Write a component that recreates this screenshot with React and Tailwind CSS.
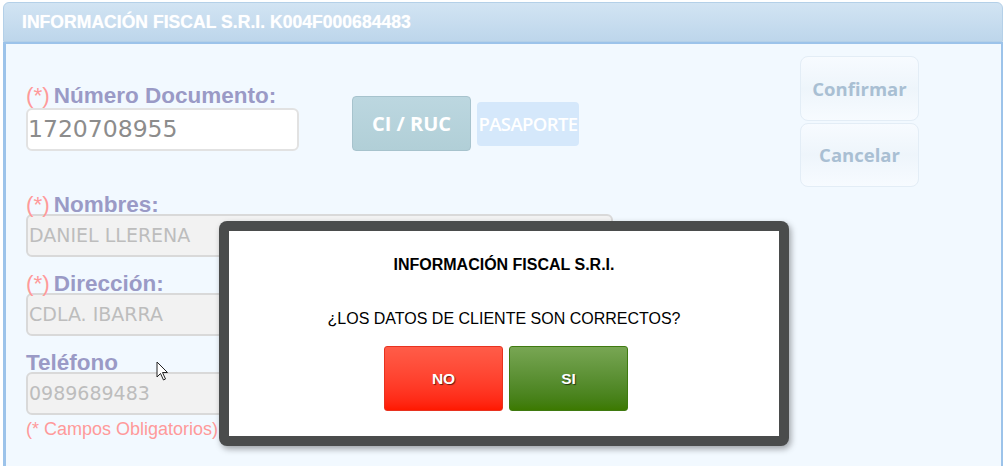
import React from 'react';

const labelCls = "font-['Liberation_Sans',Arial,sans-serif] text-[22.5px] leading-[23px] font-bold text-[#9a9ac6] whitespace-nowrap";
const reqCls = "font-normal text-[#ff9a9a] mr-[4px]";

const Field = ({ label, required, value, className }) => (
  <div className={className}>
    <div className={labelCls}>
      {required && <span className={reqCls}>(*)</span>}
      {label}
    </div>
    <div className="mt-[-2px] h-[43px] w-[587px] rounded-[6px] border-2 border-[#d9d9d9] bg-[#f2f2f2] flex items-center px-[1px] font-['DejaVu_Sans',sans-serif] text-[19px] text-[#bdbdbd]">
      {value}
    </div>
  </div>
);

const Cursor = () => (
  <svg className="absolute left-[156px] top-[361px]" width="13" height="20" viewBox="0 0 13 20">
    <path d="M1 1 L1 16 L4.5 12.5 L7.5 19 L9.5 18 L6.5 11.5 L11.5 11.5 Z" fill="#fff" stroke="#222" strokeWidth="1" strokeLinejoin="round" />
  </svg>
);

export default function App() {
  return (
    <div className="relative w-[1005px] h-[466px] bg-white overflow-hidden font-['Liberation_Sans',Arial,sans-serif]">
      <div className="ml-[3px] mr-[2px] mt-[2px] flex flex-col h-[464px]">
        {/* title bar */}
        <div className="h-[40px] rounded-t-[6px] border border-[#b4d0e8] bg-gradient-to-b from-[#d2e4f3] to-[#bdd6eb] flex items-center pl-[18px]">
          <span className="text-[17.6px] font-bold text-white [text-shadow:0_0_1px_rgba(255,255,255,0.6)]">
            INFORMACIÓN FISCAL S.R.I. K004F000684483
          </span>
        </div>

        {/* body */}
        <div className="flex-1 border-t-2 border-l-[3px] border-r-[2px] border-[#9cc3ea] bg-[#f2f9ff] flex pl-[20px]">
          <div className="w-[587px] flex flex-col pt-[40px]">
            <div className={labelCls}>
              <span className={reqCls}>(*)</span>Número Documento:
            </div>
            <div className="flex items-end mt-[-11px]">
              <div className="h-[43px] w-[273px] rounded-[6px] border-2 border-[#e2e2e2] bg-white flex items-center px-0 font-['DejaVu_Sans',sans-serif] text-[23.5px] text-[#8c8c8c]">
                1720708955
              </div>
              <div className="ml-[53px] flex items-center">
                <div className="h-[55px] w-[119px] rounded-[4px] border border-[#a7c3cd] bg-gradient-to-b from-[#bcd7e0] to-[#b1cfd7] flex items-center justify-center font-['Open_Sans',sans-serif] font-bold text-[20px] text-white">
                  CI / RUC
                </div>
                <div className="ml-[6px] h-[44px] w-[102px] rounded-[4px] bg-[#d5e8fb] flex items-center justify-center overflow-hidden font-['Open_Sans',sans-serif] font-semibold text-[18.5px] text-white tracking-[-0.6px] whitespace-nowrap">
                  PASAPORTE
                </div>
              </div>
            </div>

            <Field className="mt-[42px]" label="Nombres:" required value="DANIEL LLERENA" />
            <Field className="mt-[15px]" label="Dirección:" required value="CDLA. IBARRA" />
            <Field className="mt-[15px]" label="Teléfono" value="0989689483" />
            <div className="mt-[3px] text-[18px] text-[#ff9a9a] leading-[22px]">(* Campos Obligatorios)</div>
          </div>

          <div className="ml-[187px] pt-[12px] flex flex-col gap-[2px]">
            <div className="h-[65px] w-[119px] rounded-[8px] border border-[#e3edf6] bg-gradient-to-b from-[#f7fbff] via-[#eef5fb] to-[#f7fbff] flex items-center justify-center font-['Open_Sans',sans-serif] font-bold text-[18.5px] text-[#a9bfd3]">
              Confirmar
            </div>
            <div className="h-[64px] w-[119px] rounded-[8px] border border-[#e3edf6] bg-gradient-to-b from-[#f7fbff] via-[#eef5fb] to-[#f7fbff] flex items-center justify-center font-['Open_Sans',sans-serif] font-bold text-[18.5px] text-[#a9bfd3]">
              Cancelar
            </div>
          </div>
        </div>
      </div>

      <Cursor />

      {/* confirmation dialog */}
      <div className="absolute left-[219px] top-[221px] w-[570px] h-[225px] rounded-[8px] bg-[#4a4c4c] p-[10px] shadow-[2px_3px_6px_rgba(0,0,0,0.35)]">
        <div className="h-full w-full bg-white flex flex-col items-center">
          <div className="mt-[25px] text-[16px] font-bold text-black leading-[18px]">INFORMACIÓN FISCAL S.R.I.</div>
          <div className="mt-[36px] text-[16px] text-black leading-[18px]">¿LOS DATOS DE CLIENTE SON CORRECTOS?</div>
          <div className="mt-[18px] flex gap-[6px] ml-[4px]">
            <div className="h-[65px] w-[119px] rounded-[3px] border border-[#e8321f] bg-gradient-to-b from-[#ff5c48] to-[#ff1800] flex items-center justify-center text-[15.5px] font-bold text-white [text-shadow:1px_1px_1px_rgba(0,0,0,0.6)]">
              NO
            </div>
            <div className="h-[65px] w-[119px] rounded-[3px] border border-[#3f7a10] bg-gradient-to-b from-[#78a653] to-[#3c7900] flex items-center justify-center text-[15.5px] font-bold text-white [text-shadow:1px_1px_1px_rgba(0,0,0,0.6)]">
              SI
            </div>
          </div>
        </div>
      </div>
    </div>
  );
}
